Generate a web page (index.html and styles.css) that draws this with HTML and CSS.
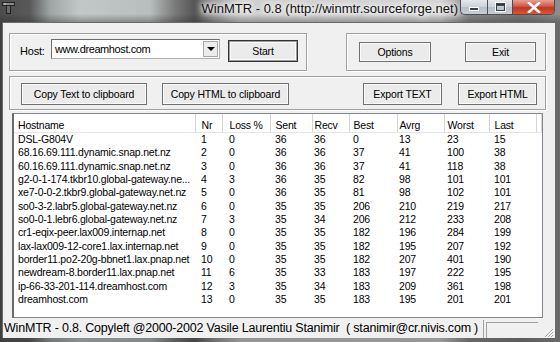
FILE: index.html
```html
<!DOCTYPE html>
<html lang="en">
<head>
    <meta charset="UTF-8">
    <title>WinMTR - 0.8</title>
    <link rel="stylesheet" href="styles.css">
</head>
<body>
    <div class="window">

        <!-- Title bar -->
        <div class="titlebar">
            <svg class="app-icon" width="13" height="12" viewBox="0 0 13 12">
                <rect x="0.5" y="0.5" width="12" height="3" fill="#8a8a8a" stroke="#222"/>
                <rect x="4.5" y="3.5" width="4" height="8" fill="#6a6a6a" stroke="#222"/>
                <rect x="2" y="1.5" width="2" height="1" fill="#ddd"/>
            </svg>
            <div class="title">WinMTR - 0.8 (http://winmtr.sourceforge.net)</div>
            <div class="caption-buttons">
                <span class="cap cap-min"><i></i></span>
                <span class="cap cap-max"><i></i></span>
                <span class="cap cap-close">
                    <svg width="14" height="11" viewBox="0 0 14 11">
                        <path d="M2 1 L12 10 M12 1 L2 10" stroke="#fff" stroke-width="2.6" stroke-linecap="square"/>
                    </svg>
                </span>
            </div>
        </div>

        <!-- Client area -->
        <div class="client">
            <div class="top-row">
                <div class="group host-group">
                    <span class="host-label">Host:</span>
                    <div class="combo">
                        <span class="combo-text">www.dreamhost.com</span>
                        <span class="combo-drop"><i></i></span>
                    </div>
                    <button class="btn btn-default btn-start">Start</button>
                </div>
                <div class="group action-group">
                    <button class="btn btn-options">Options</button>
                    <button class="btn btn-exit">Exit</button>
                </div>
            </div>

            <div class="group export-group">
                <button class="btn btn-copy">Copy Text to clipboard</button>
                <button class="btn btn-copy btn-copy-html">Copy HTML to clipboard</button>
                <button class="btn btn-export btn-export-text">Export TEXT</button>
                <button class="btn btn-export">Export HTML</button>
            </div>

            <div class="list">
                <table>
                    <colgroup>
                        <col style="width:181px">
                        <col style="width:27px">
                        <col style="width:48px">
                        <col style="width:42px">
                        <col style="width:37px">
                        <col style="width:48px">
                        <col style="width:47px">
                        <col style="width:45px">
                        <col style="width:47px">
                        <col>
                    </colgroup>
                    <thead>
                        <tr><th>Hostname</th><th>Nr</th><th>Loss %</th><th>Sent</th><th>Recv</th><th>Best</th><th>Avrg</th><th>Worst</th><th>Last</th><th></th></tr>
                    </thead>
                    <tbody>
                        <tr><td>DSL-G804V</td><td>1</td><td>0</td><td>36</td><td>36</td><td>0</td><td>13</td><td>23</td><td>15</td><td></td></tr>
                        <tr><td>68.16.69.111.dynamic.snap.net.nz</td><td>2</td><td>0</td><td>36</td><td>36</td><td>37</td><td>41</td><td>100</td><td>38</td><td></td></tr>
                        <tr><td>60.16.69.111.dynamic.snap.net.nz</td><td>3</td><td>0</td><td>36</td><td>36</td><td>37</td><td>41</td><td>118</td><td>38</td><td></td></tr>
                        <tr><td>g2-0-1-174.tkbr10.global-gateway.ne...</td><td>4</td><td>3</td><td>36</td><td>35</td><td>82</td><td>98</td><td>101</td><td>101</td><td></td></tr>
                        <tr><td>xe7-0-0-2.tkbr9.global-gateway.net.nz</td><td>5</td><td>0</td><td>36</td><td>35</td><td>81</td><td>98</td><td>102</td><td>101</td><td></td></tr>
                        <tr><td>so0-3-2.labr5.global-gateway.net.nz</td><td>6</td><td>0</td><td>35</td><td>35</td><td>206</td><td>210</td><td>219</td><td>217</td><td></td></tr>
                        <tr><td>so0-0-1.lebr6.global-gateway.net.nz</td><td>7</td><td>3</td><td>35</td><td>34</td><td>206</td><td>212</td><td>233</td><td>208</td><td></td></tr>
                        <tr><td>cr1-eqix-peer.lax009.internap.net</td><td>8</td><td>0</td><td>35</td><td>35</td><td>182</td><td>196</td><td>284</td><td>199</td><td></td></tr>
                        <tr><td>lax-lax009-12-core1.lax.internap.net</td><td>9</td><td>0</td><td>35</td><td>35</td><td>182</td><td>195</td><td>207</td><td>192</td><td></td></tr>
                        <tr><td>border11.po2-20g-bbnet1.lax.pnap.net</td><td>10</td><td>0</td><td>35</td><td>35</td><td>182</td><td>207</td><td>401</td><td>190</td><td></td></tr>
                        <tr><td>newdream-8.border11.lax.pnap.net</td><td>11</td><td>6</td><td>35</td><td>33</td><td>183</td><td>197</td><td>222</td><td>195</td><td></td></tr>
                        <tr><td>ip-66-33-201-114.dreamhost.com</td><td>12</td><td>3</td><td>35</td><td>34</td><td>183</td><td>209</td><td>361</td><td>198</td><td></td></tr>
                        <tr><td>dreamhost.com</td><td>13</td><td>0</td><td>35</td><td>35</td><td>183</td><td>195</td><td>201</td><td>201</td><td></td></tr>
                    </tbody>
                </table>
            </div>

            <!-- Status bar -->
            <div class="statusbar">
                <div class="status-text">WinMTR - 0.8. Copyleft @2000-2002 Vasile Laurentiu Stanimir &nbsp;( stanimir@cr.nivis.com )</div>
                <div class="status-panel"></div>
                <svg class="grip" width="11" height="11" viewBox="0 0 11 11">
                    <path d="M10 2 L2 10 M10 5 L5 10 M10 8 L8 10" stroke="#a8a8a8" stroke-width="1"/>
                    <path d="M11 3 L3 11 M11 6 L6 11 M11 9 L9 11" stroke="#fff" stroke-width="1"/>
                </svg>
            </div>
        </div>
    </div>
</body>
</html>
```

FILE: styles.css
```css
* {
    margin: 0;
    padding: 0;
    box-sizing: border-box;
}

html, body {
    width: 560px;
    height: 342px;
    overflow: hidden;
}

body {
    font-family: "Liberation Sans", Arial, sans-serif;
    font-size: 10.5px;
    letter-spacing: -0.2px;
    color: #000;
    background: #5e5e5e;
}

/* Window frame (blurred glass look) */
.window {
    display: flex;
    flex-direction: column;
    height: 342px;
    background:
        linear-gradient(to bottom, rgba(0, 0, 0, 0) 0, rgba(0, 0, 0, 0) 14px, rgba(40, 40, 40, 0.35) 22px),
        linear-gradient(90deg, #4c4c4c 0, #5a5a5a 30px, #9ea4a4 50px, #c2c7c7 80px, #b8bdbd 150px, #7a7a7a 175px, #555 195px, #9a9a9a 215px, #cfcfcf 240px, #d4d4d4 440px, #8a8a8a 470px, #7a7a7a 520px, #8e8e8e 560px);
}

/* Title bar */
.titlebar {
    height: 22px;
    display: flex;
    align-items: flex-start;
}

.app-icon {
    margin: 2px 0 0 2px;
}

.title {
    margin-left: auto;
    margin-right: 2px;
    margin-top: 1px;
    font-size: 13px;
    letter-spacing: 0;
    line-height: 15px;
    color: #111;
    text-shadow: 0 0 4px #fff, 0 0 8px #fff, 0 0 10px #fff;
}

.caption-buttons {
    display: flex;
    margin-right: 5px;
}

.cap {
    height: 15px;
    display: flex;
    align-items: center;
    justify-content: center;
    border: 1px solid #4a4f55;
    border-top: none;
    background: linear-gradient(to bottom, #e4e8ec 0%, #cbd1d8 50%, #b6bec8 51%, #c8ced6 100%);
}

.cap-min {
    width: 27px;
    border-radius: 0 0 0 5px;
    border-right: none;
}

.cap-min i {
    display: block;
    width: 10px;
    height: 4px;
    margin-top: 3px;
    background: #3a3f45;
    border: 1px solid #fff;
}

.cap-max {
    width: 25px;
    border-right: none;
}

.cap-max i {
    display: block;
    width: 9px;
    height: 8px;
    border: 1px solid #3a3f45;
    border-top-width: 3px;
    box-shadow: 0 0 0 1px #fff;
}

.cap-close {
    width: 43px;
    border-radius: 0 0 5px 0;
    background: linear-gradient(to bottom, #e8a090 0%, #d05a45 45%, #c2341c 55%, #d55a3a 100%);
}

/* Client area */
.client {
    flex: 1;
    display: flex;
    flex-direction: column;
    margin: 0 4px 4px 2px;
    border: 1px solid #6a6a6a;
    border-bottom: none;
    background: #f0f0f0;
}

.top-row {
    display: flex;
    justify-content: space-between;
    height: 38px;
    margin: 10px 9px 0 6px;
}

/* Group boxes */
.group {
    display: flex;
    align-items: flex-start;
    border: 1px solid #a0a0a0;
    box-shadow: inset 1px 1px 0 #fff, 1px 1px 0 #fff;
}

.host-group {
    width: 298px;
    padding-left: 10px;
}

.host-label {
    width: 31px;
    margin-top: 11px;
    font-size: 11px;
}

.combo {
    display: flex;
    align-items: center;
    width: 169px;
    height: 20px;
    margin-top: 5px;
    padding: 0 1px 0 3px;
    background: #fff;
    border: 1px solid #6e6e6e;
    border-right-color: #b0b0b0;
    border-bottom-color: #b0b0b0;
}

.combo-text {
    flex: 1;
    font-size: 11px;
    letter-spacing: -0.4px;
}

.combo-drop {
    display: flex;
    align-items: center;
    justify-content: center;
    width: 15px;
    height: 16px;
    background: #ececec;
    border: 1px solid #a8a8a8;
}

.combo-drop i {
    display: block;
    border-left: 4px solid transparent;
    border-right: 4px solid transparent;
    border-top: 4px solid #000;
}

.action-group {
    width: 200px;
    padding-left: 12px;
    gap: 34px;
}

.export-group {
    height: 34px;
    margin: 5px 9px 0 6px;
    padding-left: 11px;
}

/* Buttons */
.btn {
    font-family: inherit;
    font-size: 10.5px;
    letter-spacing: -0.15px;
    color: #000;
    height: 22px;
    background: #ebebeb;
    border: 1px solid #707070;
    box-shadow: inset 0 0 0 1px #fbfbfb;
}

.btn-default {
    border-color: #333;
    box-shadow: inset 0 0 0 1px #9a9a9a, inset 0 0 0 2px #fbfbfb;
}

.btn-start {
    width: 70px;
    margin: 6px 0 0 8px;
}

.btn-options,
.btn-exit {
    width: 72px;
    height: 20px;
    margin-top: 8px;
}

.btn-exit {
    width: 71px;
}

.btn-copy {
    width: 126px;
    margin-top: 6px;
}

.btn-copy-html {
    width: 127px;
    margin-left: 15px;
}

.btn-export {
    width: 79px;
    margin: 6px 0 0 16px;
}

.btn-export-text {
    margin-left: auto;
}

.export-group .btn-export:last-child {
    margin-right: 8px;
}

/* Hop list */
.list {
    flex: 1;
    margin: 3px 12px 0 9px;
    background: #fff;
    border: 1px solid #828790;
    border-left: 2px solid #6a6a6a;
    overflow: hidden;
}

.list table {
    width: 100%;
    table-layout: fixed;
    border-collapse: collapse;
}

.list th,
.list td {
    text-align: left;
    font-weight: normal;
    white-space: nowrap;
    overflow: hidden;
    padding-left: 5px;
}

.list th {
    height: 18px;
    padding-top: 5px;
    line-height: 13px;
    vertical-align: top;
    border-right: 1px solid #d5d5d5;
    border-bottom: 1px solid #e5e5e5;
}

.list td {
    height: 13.33px;
    line-height: 13.33px;
}

.list th:nth-child(1),
.list td:nth-child(1) { padding-left: 4px; }
.list th:nth-child(2),
.list td:nth-child(2) { padding-left: 6px; }
.list th:nth-child(3),
.list td:nth-child(3) { padding-left: 7px; }
.list th:nth-child(5),
.list td:nth-child(5),
.list th:nth-child(7),
.list td:nth-child(7) { padding-left: 2px; }
.list th:nth-child(6),
.list td:nth-child(6) { padding-left: 4px; }
.list th:nth-child(8),
.list td:nth-child(8) { padding-left: 3px; }

/* Status bar */
.statusbar {
    display: flex;
    align-items: flex-end;
    height: 18px;
    margin-top: 2px;
}

.status-text {
    width: 481px;
    height: 18px;
    padding-left: 1px;
    line-height: 17px;
    font-size: 12.5px;
    letter-spacing: -0.2px;
    white-space: nowrap;
    overflow: hidden;
    border-right: 1px solid #a0a0a0;
}

.status-panel {
    width: 52px;
    height: 16px;
    margin-left: 2px;
    border-top: 1px solid #a0a0a0;
    border-left: 1px solid #a0a0a0;
}

.grip {
    margin-left: auto;
    margin-right: 1px;
}
```
